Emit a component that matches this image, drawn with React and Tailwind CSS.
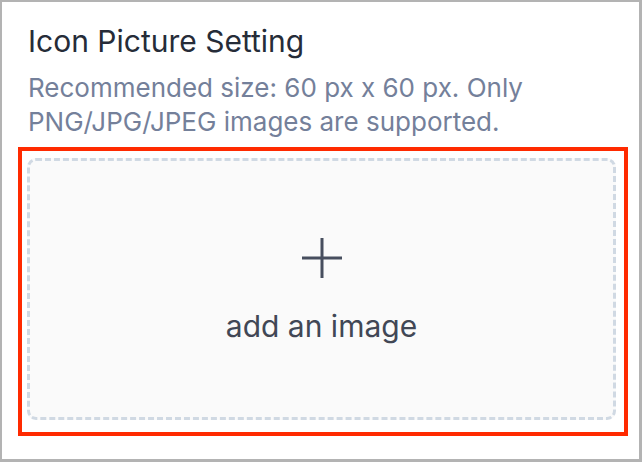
export default function App() {
  return (
    <div
      className="w-[642px] h-[462px] bg-white border-l-2 border-t-2 border-r-[3px] border-b-[3px] border-[#b3b3b3] pl-[16px] pr-[11px] pt-[21px]"
      style={{ fontFamily: 'Inter, "Noto Sans", sans-serif' }}
    >
      <div className="pl-[10px] pr-[20px]">
        <h2 className="text-[30px] leading-[36px] text-[#262c38]">Icon Picture Setting</h2>
        <p className="mt-[12px] text-[26px] leading-[34px] text-[#74809a]">
          Recommended size: 60 px x 60 px. Only PNG/JPG/JPEG images are supported.
        </p>
      </div>

      <div className="mt-[8px] border-[4px] border-[#ff2a00] pt-[7px] pb-[12px] pl-[5px] pr-[8px]">
        <div className="h-[262px] rounded-[9px] border-[3px] border-dashed border-[#d0d9e3] bg-[#fafafa] flex flex-col items-center justify-center">
          <svg width="42" height="42" viewBox="0 0 42 42" className="text-[#474e5e]">
            <path d="M21 1v40M1 21h40" stroke="currentColor" strokeWidth="3" />
          </svg>
          <div className="mt-[31px] text-[30px] leading-[32px] text-[#414755]">add an image</div>
        </div>
      </div>
    </div>
  )
}
